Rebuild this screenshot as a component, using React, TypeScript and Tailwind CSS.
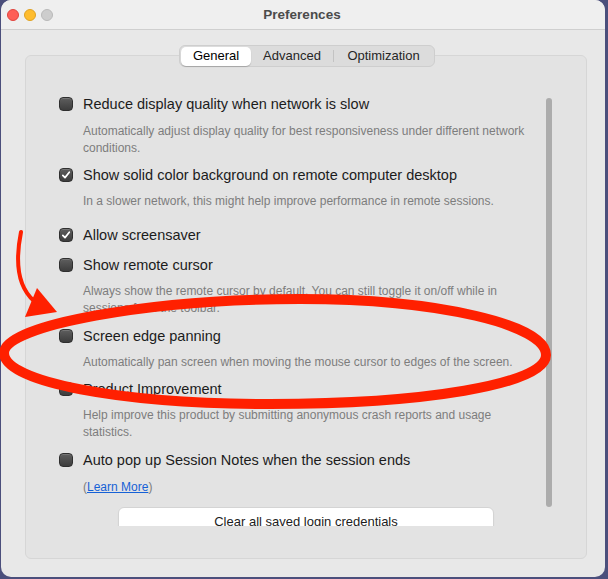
import React from "react"

type Pref = {
    label: string
    desc?: string[]
    checked: boolean
    gap: string
    descGap?: string
}

const prefs: Pref[] = [
    {
        label: "Reduce display quality when network is slow",
        desc: [
            "Automatically adjust display quality for best responsiveness under different network",
            "conditions.",
        ],
        checked: false,
        gap: "mt-0",
        descGap: "mt-[10px]",
    },
    {
        label: "Show solid color background on remote computer desktop",
        desc: ["In a slower network, this might help improve performance in remote sessions."],
        checked: true,
        gap: "mt-[9px]",
    },
    { label: "Allow screensaver", checked: true, gap: "mt-[16px]" },
    {
        label: "Show remote cursor",
        desc: [
            "Always show the remote cursor by default. You can still toggle it on/off while in",
            "sessions from the toolbar.",
        ],
        checked: false,
        gap: "mt-[12px]",
    },
    {
        label: "Screen edge panning",
        desc: ["Automatically pan screen when moving the mouse cursor to edges of the screen."],
        checked: false,
        gap: "mt-[10px]",
    },
    {
        label: "Product Improvement",
        desc: [
            "Help improve this product by submitting anonymous crash reports and usage",
            "statistics.",
        ],
        checked: false,
        gap: "mt-[9px]",
    },
    { label: "Auto pop up Session Notes when the session ends", checked: false, gap: "mt-[10px]" },
]

function Checkbox({ checked }: { checked: boolean }) {
    return (
        <span className="w-[14px] h-[14px] rounded-[4px] border border-[#2f2f2f] bg-gradient-to-b from-[#5e5e5e] to-[#3d3d3d] flex items-center justify-center shrink-0 shadow-[inset_0_1px_0_rgba(255,255,255,0.15)]">
            {checked && (
                <svg width="10" height="10" viewBox="0 0 10 10">
                    <path d="M1.8 5.3 L4 7.6 L8.3 2.2" fill="none" stroke="#fff" strokeWidth="1.7" strokeLinecap="round" strokeLinejoin="round" />
                </svg>
            )}
        </span>
    )
}

export default function App() {
    return (
        <div className="w-[608px] h-[579px] bg-[#4b4f7c] pl-px pr-[3px] pb-[2px] font-['Liberation_Sans',Arial,sans-serif] relative">
            <div className="h-[577px] bg-[#e8e8e8] rounded-[10px] overflow-hidden flex flex-col">
                {/* title bar */}
                <div className="h-[30px] bg-[#efefef] border-b border-[#cfcfcf] flex items-center relative shrink-0">
                    <div className="flex gap-[5px] pl-[6px]">
                        <span className="w-[12px] h-[12px] rounded-full bg-[#fe5f57] border border-[#e0443e]" />
                        <span className="w-[12px] h-[12px] rounded-full bg-[#febc2e] border border-[#dea123]" />
                        <span className="w-[12px] h-[12px] rounded-full bg-[#cdcdcd] border border-[#b9b9b9]" />
                    </div>
                    <div className="flex-1 text-center text-[13.5px] font-bold text-[#4b4b4b] pr-[54px] pt-px">
                        Preferences
                    </div>
                </div>

                <div className="pt-[15px] pl-[24px] pr-[18px] flex flex-col">
                    {/* tabs */}
                    <div className="self-center ml-[2px] relative z-10 flex items-center h-[22px] w-[256px] rounded-[6px] bg-[#dcdcdc] border border-[#cecece] text-[13px] text-[#262626] p-px">
                        <div className="w-[70px] h-[19px] rounded-[5px] bg-white shadow-[0_1px_1px_rgba(0,0,0,0.2)] flex items-center justify-center text-black">
                            General
                        </div>
                        <div className="w-[82px] text-center">Advanced</div>
                        <div className="w-px h-[12px] bg-[#c3c3c3]" />
                        <div className="flex-1 text-center">Optimization</div>
                    </div>

                    {/* group box */}
                    <div className="-mt-[12px] h-[504px] rounded-[6px] bg-[#e3e3e3] border border-[#d6d6d6] pt-[25px]">
                        <div className="relative h-[445px] overflow-hidden pt-[14px] pl-[33px]">
                            <div className="flex flex-col">
                                {prefs.map((p) => (
                                    <div key={p.label} className={p.gap}>
                                        <div className="flex items-center gap-[10px] h-[18px]">
                                            <Checkbox checked={p.checked} />
                                            <span className="text-[14.5px] leading-[18px] text-[#1c1c1c]">{p.label}</span>
                                        </div>
                                        {p.desc && (
                                            <div className={`${p.descGap ?? "mt-[9px]"} pl-[24px] text-[12px] leading-[17px] text-[#7d7d7d]`}>
                                                {p.desc.map((line) => (
                                                    <div key={line}>{line}</div>
                                                ))}
                                            </div>
                                        )}
                                    </div>
                                ))}
                                <div className="mt-[10px] pl-[24px] text-[12px] leading-[17px] text-[#7d7d7d]">
                                    (<span className="text-[#1661d6] underline">Learn More</span>)
                                </div>
                                <div className="mt-[11px] ml-[59px] w-[376px] h-[30px] shrink-0 rounded-[6px] bg-white border border-[#d4d4d4] shadow-[0_1px_1px_rgba(0,0,0,0.08)] flex items-center justify-center text-[13px] text-[#1c1c1c]">
                                    Clear all saved login credentials
                                </div>
                            </div>

                            {/* overlay scrollbar */}
                            <div className="absolute left-[520px] top-[17px] w-[6px] h-[409px] rounded-full bg-[#acacac]" />
                        </div>
                    </div>
                </div>
            </div>

            {/* red markup */}
            <svg className="absolute inset-0 pointer-events-none" width="608" height="579" viewBox="0 0 608 579">
                <path
                    d="M4 353 C 4 325, 150 299, 300 299 C 440 299, 546 325, 546 355 C 546 385, 420 404, 270 404 C 120 404, 4 382, 4 353 Z"
                    fill="none"
                    stroke="#ff2000"
                    strokeWidth="10"
                />
                <path d="M21 232 C 15 262, 17 286, 34 301" fill="none" stroke="#ff2000" strokeWidth="4" strokeLinecap="round" />
                <polygon points="57,312 37,288 25,317" fill="#ff2000" />
            </svg>
        </div>
    )
}
